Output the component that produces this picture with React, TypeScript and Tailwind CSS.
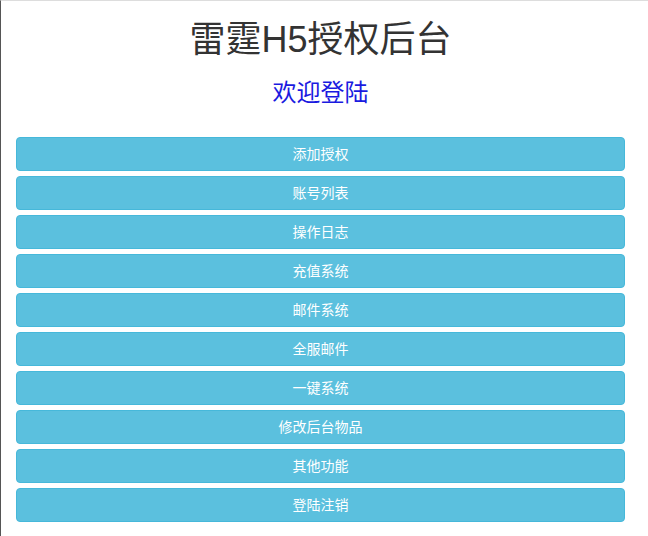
const items = [
  "添加授权",
  "账号列表",
  "操作日志",
  "充值系统",
  "邮件系统",
  "全服邮件",
  "一键系统",
  "修改后台物品",
  "其他功能",
  "登陆注销",
];

export default function App() {
  return (
    <div
      className="h-[536px] w-[648px] border-l border-t border-l-[#555] border-t-[#ddd] bg-white text-[#333]"
      style={{ fontFamily: '"Liberation Sans", "Noto Sans CJK SC", sans-serif' }}
    >
      <div className="w-[609px] ml-[15px]">
        <h1 className="mt-[19px] mb-[10px] text-center text-[36px] leading-[1.1] font-normal">
          雷霆H5授权后台
        </h1>
        <h3 className="mt-[20px] mb-[10px] text-center text-[24px] leading-[1.1] font-normal text-[#1a1ae0]">
          欢迎登陆
        </h3>
        <div className="flex flex-col gap-[5px] pt-[21px]">
          {items.map((t) => (
            <button
              key={t}
              className="h-[34px] w-full rounded-[4px] border border-[#46b8da] bg-[#5bc0de] text-[14px] leading-[20px] text-white"
            >
              {t}
            </button>
          ))}
        </div>
      </div>
    </div>
  );
}
